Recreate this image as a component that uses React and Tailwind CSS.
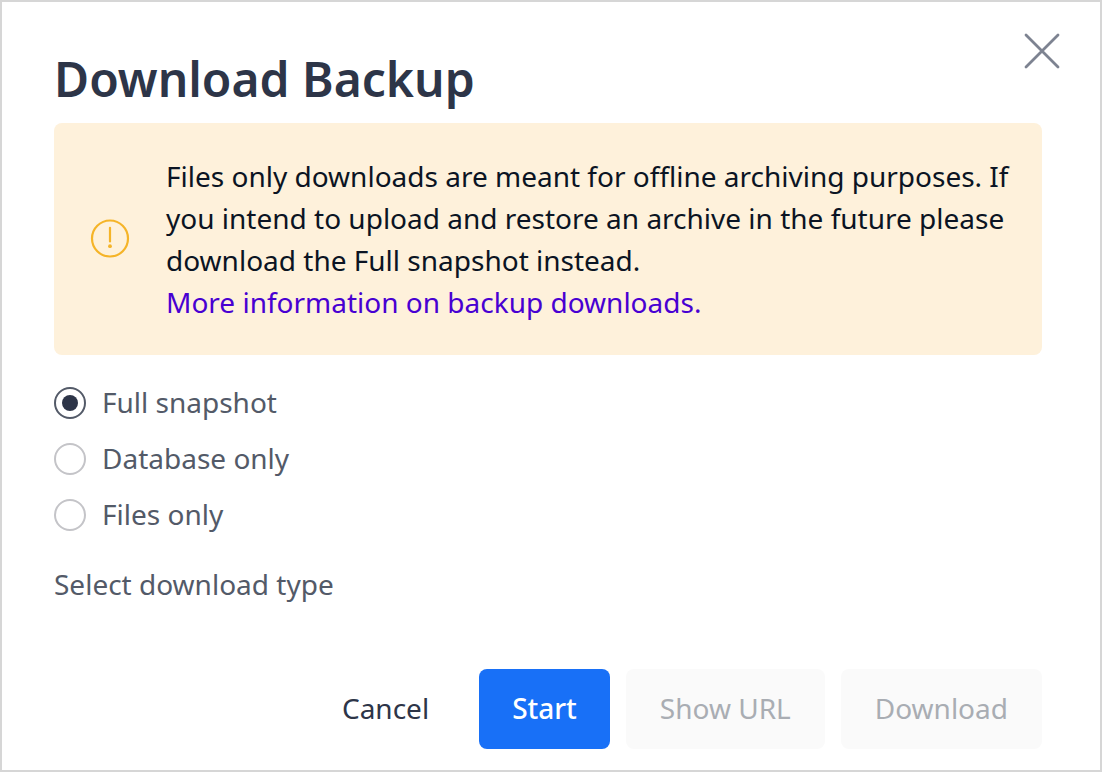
const options = ["Full snapshot", "Database only", "Files only"];

function CloseIcon() {
  return (
    <svg viewBox="0 0 36 36" className="size-9" fill="none" stroke="currentColor" strokeWidth="2.800" strokeLinecap="round" aria-hidden="true">
      <path d="M2 2 34 34M34 2 2 34" />
    </svg>
  );
}

function WarningIcon() {
  return (
    <svg viewBox="0 0 40 40" className="size-10 shrink-0 text-[#f5b428]" fill="none" stroke="currentColor" strokeWidth="2.200" strokeLinecap="round" aria-hidden="true">
      <circle cx="20" cy="19.500" r="18" />
      <path d="M20 8.800V22.500" />
      <circle cx="20" cy="27.200" r="1.900" fill="currentColor" stroke="none" />
    </svg>
  );
}

export default function App() {
  return (
    <main className="min-h-screen border-2 border-[#d6d6d6] bg-white pt-[31px] pr-10 pb-5 pl-[52px] font-['Noto_Sans',sans-serif] text-[28px] leading-[42px] text-[#535a68]">
      <header className="flex items-start justify-between">
        <h1 className="pt-4 text-[48px] leading-[60px] font-semibold text-[#2d3548]">Download Backup</h1>
        <button type="button" aria-label="Close" className="text-[#7d8391]"><CloseIcon /></button>
      </header>
      <div className="mr-[18px]">
        <section className="mt-[14px] flex items-center gap-9 rounded-lg bg-[#fef1db] py-8 pr-8 pl-9 text-[#0b1423]">
          <WarningIcon />
          <p>
            Files only downloads are meant for offline archiving purposes. If you intend to upload and restore an archive in the future please download the Full snapshot instead.
            <a href="#backup-downloads" className="block text-[#4800d2]">More information on backup downloads.</a>
          </p>
        </section>
        <fieldset aria-labelledby="download-type" className="mt-[26px] flex flex-col gap-[14px]">
          {options.map((option, i) => (
            <label key={option} className="flex items-start gap-4">
              <input type="radio" name="type" defaultChecked={i === 0} className="mt-1.5 size-8 appearance-none rounded-full border-2 border-[#c4c4c8] bg-white checked:border-[#535a68] checked:bg-[#2d3548] checked:bg-clip-content checked:p-[6px]" />
              {option}
            </label>
          ))}
        </fieldset>
        <p id="download-type" className="mt-7">Select download type</p>
        <footer className="mt-16 flex justify-end gap-4">
          <button type="button" className="mr-[18px] h-20 px-4 pb-0.5 text-[#2d3548]">Cancel</button>
          <button type="button" className="h-20 rounded-lg bg-[#1870f7] px-[33px] pb-0.5 font-medium text-white">Start</button>
          <button type="button" disabled className="h-20 rounded-lg bg-[#fafafa] px-[34px] pb-0.5 text-[#a9adb3]">Show URL</button>
          <button type="button" disabled className="h-20 rounded-lg bg-[#fafafa] px-[34px] pb-0.5 text-[#a9adb3]">Download</button>
        </footer>
      </div>
    </main>
  );
}
